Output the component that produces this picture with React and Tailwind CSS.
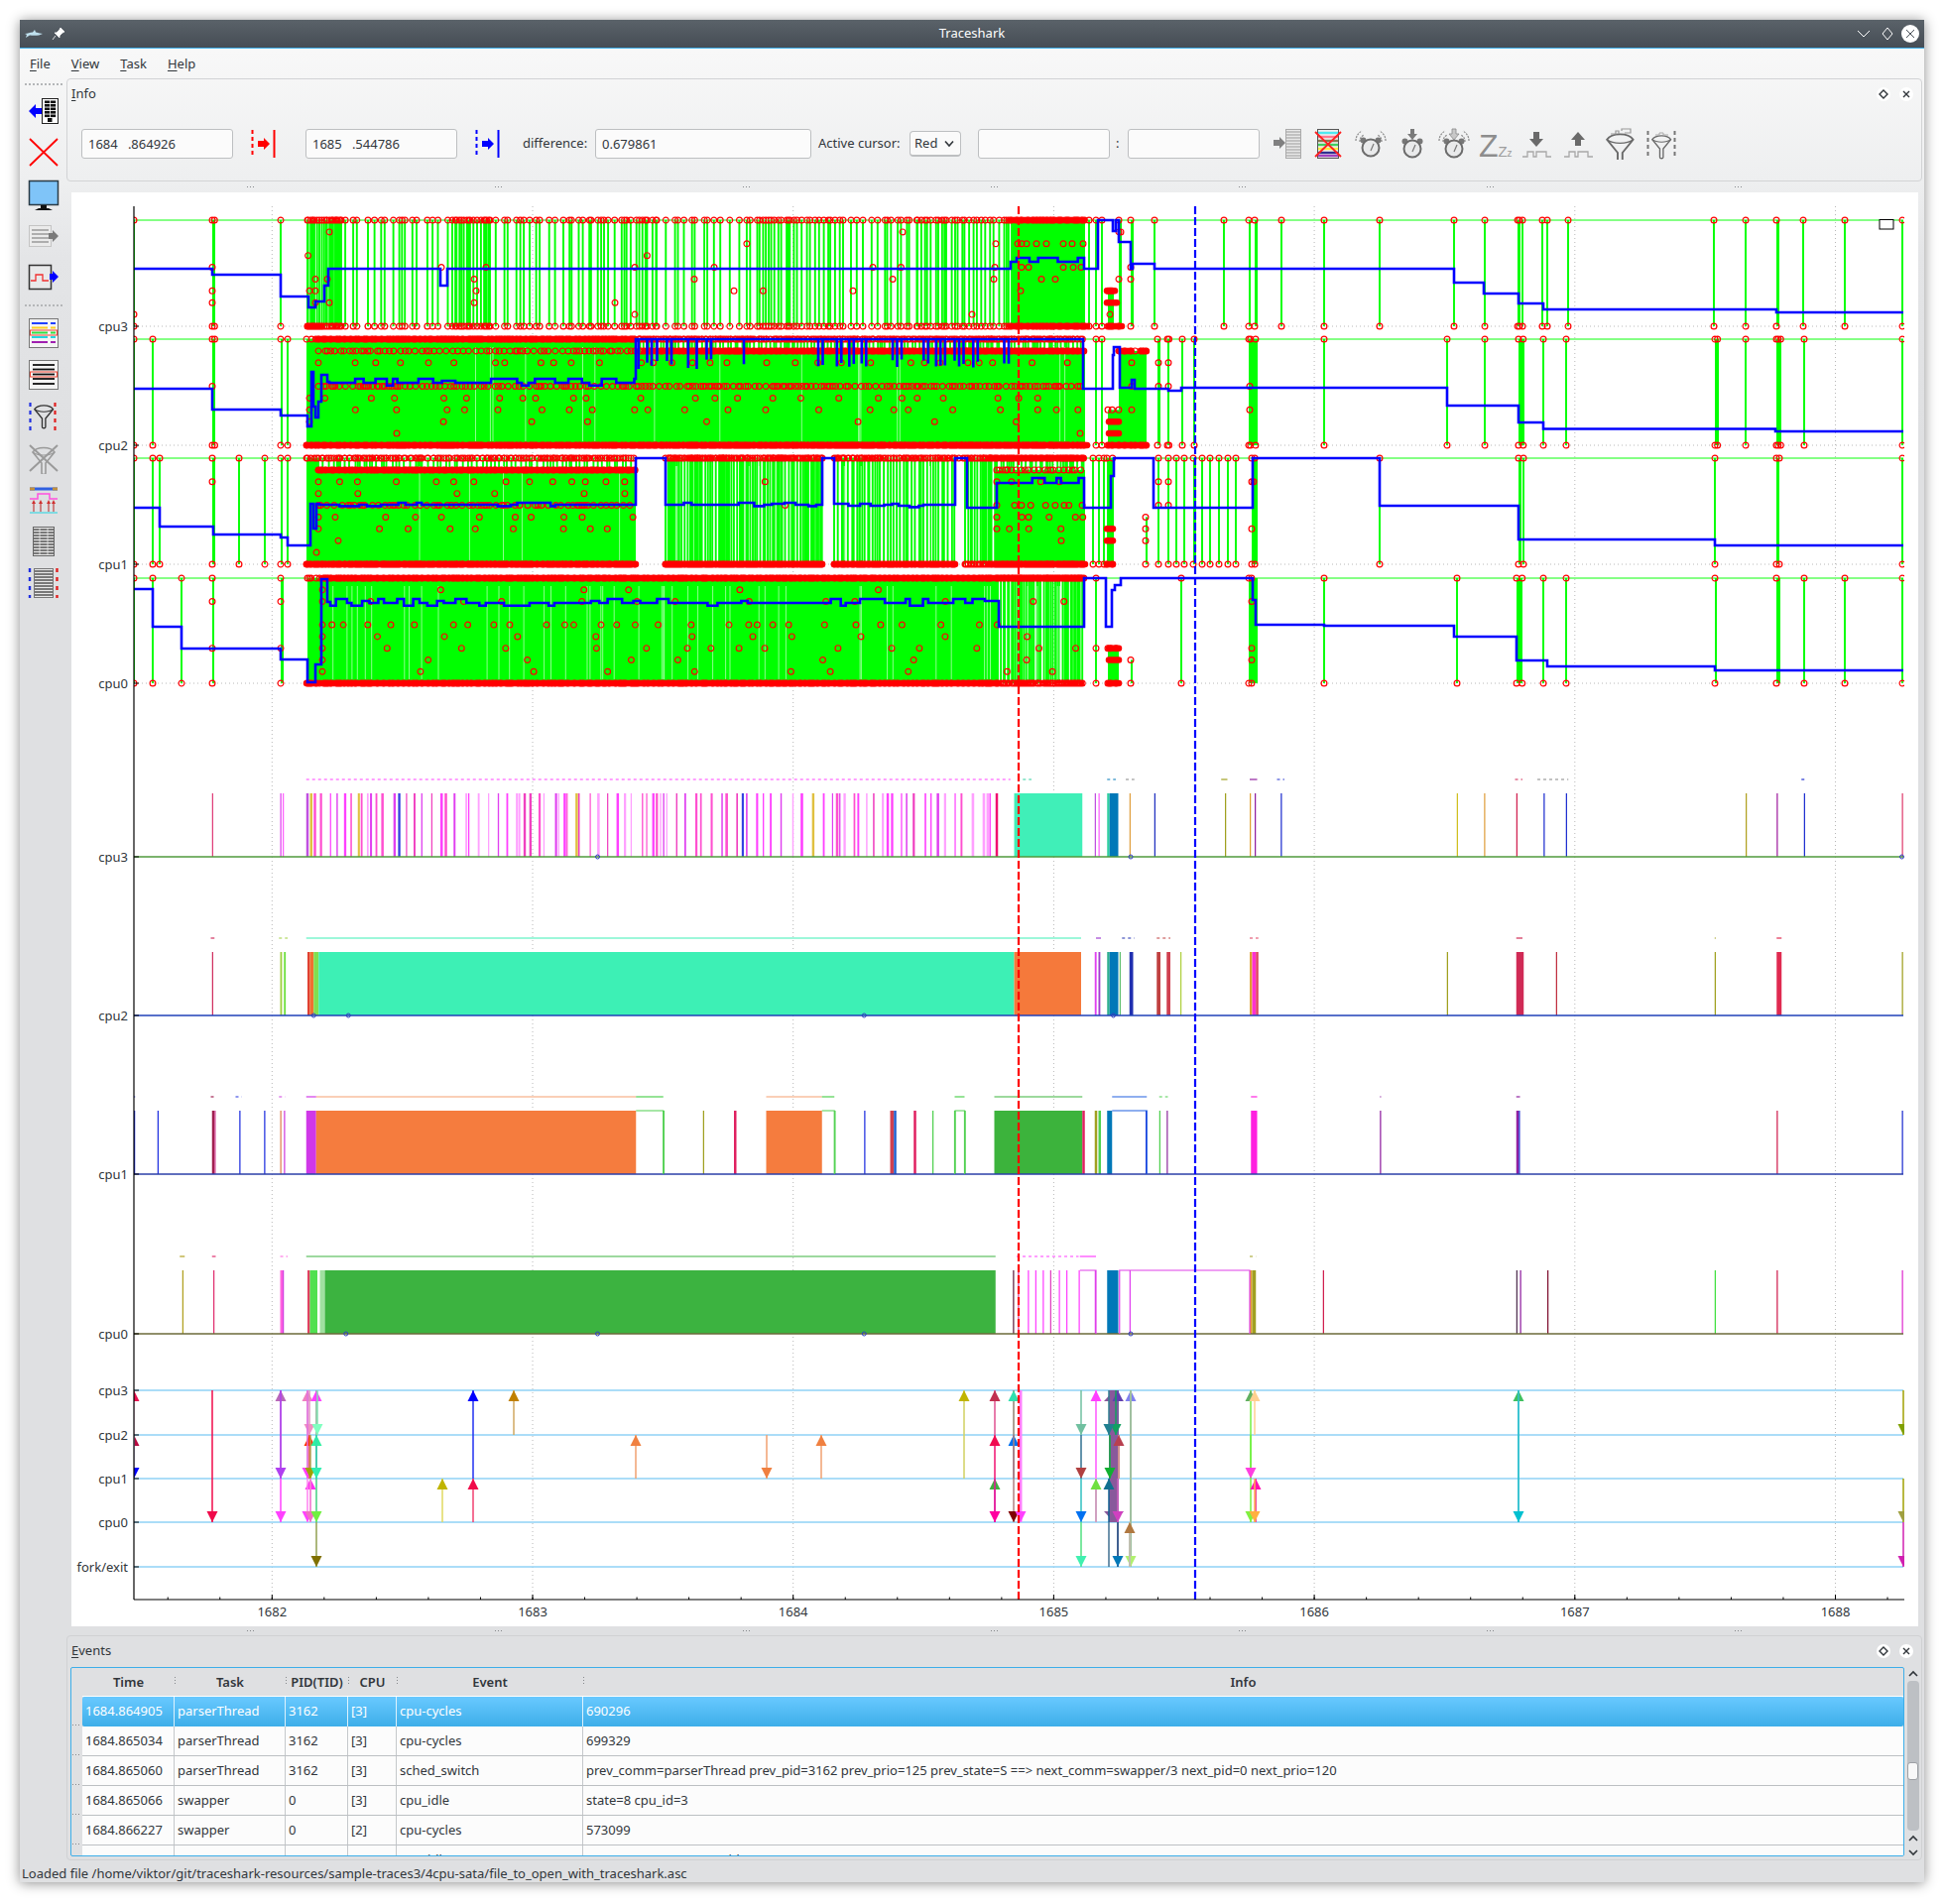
import React from 'react';

// ---- deterministic noise so the chart stays stable between runs ----
let seed = 1337;
const rnd = () => {
  seed |= 0; seed = (seed + 0x6d2b79f5) | 0;
  let t = Math.imul(seed ^ (seed >>> 15), 1 | seed);
  t = (t + Math.imul(t ^ (t >>> 7), 61 | t)) ^ t;
  return ((t ^ (t >>> 14)) >>> 0) / 4294967296;
};
const spread = (a, b, gap) => {
  const out = [];
  let x = a;
  while (x < b) { out.push(x); x += gap * (0.35 + rnd() * 1.3); }
  return out;
};
const S = (v) => v * 1.25;

const LEFT = 135;
const RIGHT = 1919;
const AXIS_Y = 1613;
const RED_X = 1027;
const BLUE_X = 1205;
const secX = (t) => 274.3 + 262.7 * (t - 1682);

// ---- frequency plots ----
function wiggle(pts, x0, x1, y, amp) {
  let x = x0;
  while (x < x1) {
    const w = 4 + rnd() * 11;
    const nx = Math.min(x + w, x1);
    const r = rnd();
    const yy = r < 0.5 ? y : r < 0.8 ? y - amp : r < 0.92 ? y + amp * 0.7 : y - amp * 0.5;
    pts.push([x, yy], [nx, yy]);
    x = nx;
  }
}
function steps(x0, segs) {
  const pts = [];
  let x = x0;
  for (const [xe, y, kind, extra] of segs) {
    if (kind === 'w') wiggle(pts, x, xe, y, extra ?? 4);
    else if (kind === 'spikes') {
      pts.push([x, y]);
      for (const [a, b] of extra) {
        for (let p = a; p <= b; p += 4.5) {
          pts.push([p, y], [p, y + 20 + rnd() * 11], [p, y]);
        }
      }
      pts.push([xe, y]);
    } else pts.push([x, y], [xe, y]);
    x = xe;
  }
  return pts.map((p) => p.map((n) => n.toFixed(1)).join(',')).join(' ');
}

const SPIKES = [[515, 518], [522, 526], [530, 533], [538, 545], [555, 558], [562, 565], [570, 575], [600, 603], [660, 664], [675, 679], [685, 689], [695, 701], [720, 728], [745, 749], [755, 763], [770, 778], [785, 789], [810, 815]].map(([a, b]) => [S(a), S(b)]);

const CPUS = [
  {
    name: 'cpu3', top: 222, base: 329,
    forests: [[310, 344, 1.6], [344, 456, 7], [456, 494, 2.5], [494, 568, 6], [568, 662, 4.5], [662, 775, 6], [775, 850, 3.5], [850, 925, 6], [925, 1019, 3.5]],
    solids: [[1019, 1094, 0], [1117, 1123, 6], [1128, 1131, 0], [1140, 1143, 0], [214, 217, 0], [1259, 1261, 0], [1265, 1268, 0], [1530, 1533, 0], [1791, 1794, 0]],
    singles: [135, 283, 1098, 1105, 1111, 1164, 1234, 1292, 1335, 1391, 1466, 1497, 1535, 1555, 1560, 1581, 1728, 1760, 1818, 1860, 1918],
    strips: [[0, 1019, 1092], [9, 1019, 1096], [6, 1116, 1124], [7, 1116, 1126], [9, 1118, 1131], [9, 310, 325]],
    mids: [[2, [1004, 1026, 1030, 1035, 1045, 1055, 1072, 1081, 1092]], [4, [1003, 1030, 1037, 1072, 1082, 1090, 1140, 214, 445, 490, 640, 720, 880]], [5, [1002, 1050, 1064, 1128, 1140, 318, 330, 478, 700, 900]], [6, [1029, 1120, 214, 312, 318, 480, 740, 860]], [7, [214, 318, 332, 478, 620]], [8, [1119, 135, 640, 980]], [1, [1128, 1130, 332, 910]]],
    pale: 0,
    blue: steps(LEFT, [[214, 271], [283, 277], [311, 299], [318, 310], [327, 304], [331, 288], [444, 271], [451, 288], [1019, 271], [1093, 264, 'w', 4], [1107, 271], [1122, 222], [1125, 233], [1128, 222], [1140, 244], [1142, 271], [1164, 266], [1466, 271], [1496, 285], [1531, 296], [1556, 306], [1791, 312], [1919, 315]]),
  },
  {
    name: 'cpu2', top: 342, base: 449,
    forests: [[640, 1094, 3.2, 1]],
    solids: [[309, 640, 0], [640, 1094, 1], [1117, 1130, 6], [1128, 1156, 1], [1167, 1170, 0], [1177, 1179, 0], [1259, 1268, 0], [1531, 1537, 0], [1729, 1733, 0], [1791, 1796, 0], [214, 217, 0], [283, 285, 0]],
    singles: [135, 154, 290, 1105, 1111, 1192, 1204, 1335, 1459, 1497, 1556, 1579, 1760, 1819, 1918],
    strips: [[0, 320, 640], [1, 650, 1092], [9, 309, 1096], [8, 1118, 1128], [7, 1118, 1128], [1, 1128, 1140], [1, 1150, 1155], [9, 1118, 1155]],
    chains: [[1, 321, 650, 4.5], [2, 321, 1090, 26], [4, 321, 1090, 4.5], [5, 312, 1090, 36], [6, 312, 1090, 38], [7, 312, 1090, 160], [0, 640, 1092, 3.5]],
    mids: [[8, [400, 1089]], [2, [1168, 1178, 1141]], [4, [1168, 1178, 1141, 1260, 214]], [6, [1141, 1260]]],
    pale: 16,
    blue: steps(LEFT, [[214, 392], [283, 413], [310, 419], [314, 430], [316, 375], [318, 410], [321, 421], [324, 405], [330, 378], [332, 385], [641, 386, 'w', 4], [1092, 342, 'spikes', SPIKES], [1122, 392], [1123, 358], [1129, 350], [1141, 391], [1144, 383], [1178, 392], [1191, 394], [1459, 391], [1531, 409], [1556, 426], [1790, 432.5], [1919, 435]]),
  },
  {
    name: 'cpu1', top: 462, base: 569,
    forests: [[321, 641, 4, 1], [671, 829, 2.4], [841, 963, 2.8], [973, 1005, 2.5], [1005, 1094, 3, 1]],
    solids: [[309, 321, 0], [321, 641, 1], [1005, 1094, 1], [1116, 1123, 0], [1155, 1157, 5], [1203, 1206, 0], [1262, 1268, 0], [1531, 1534, 0], [1791, 1794, 0], [214, 217, 0], [283, 285, 0]],
    singles: [135, 154, 161, 241, 267, 290, 310, 1102, 1108, 1113, 1168, 1178, 1186, 1194, 1212, 1220, 1229, 1238, 1246, 1391, 1536, 1729, 1918],
    strips: [[1, 321, 640], [9, 309, 641], [9, 671, 829], [9, 841, 963], [9, 1000, 1094], [0, 1000, 1092], [9, 1116, 1122], [6, 1116, 1122], [7, 1116, 1122]],
    chains: [[0, 321, 641, 4], [0, 671, 829, 3.2], [0, 841, 1000, 3.5], [2, 321, 640, 26], [3, 321, 640, 90], [4, 321, 640, 5], [5, 321, 640, 42], [6, 321, 640, 42], [9, 973, 1000, 3.5], [2, 1005, 1092, 30], [4, 1005, 1092, 12], [5, 1005, 1092, 18], [6, 1005, 1092, 30]],
    mids: [[7, [341, 1070]], [8, [319]], [2, [214, 1168, 1178, 1262, 1264]], [4, [1168, 1178]], [6, [1155, 1262]], [7, [1155]]],
    pale: 12,
    blue: steps(LEFT, [[161, 512], [215, 531], [283, 539], [290, 542], [313, 550], [316, 508], [319, 533], [322, 508], [641, 509, 'w', 2], [671, 462], [829, 509, 'w', 2], [841, 462], [963, 510, 'w', 2], [975, 462], [1005, 512], [1093, 487, 'w', 5], [1120, 512], [1123, 480], [1163, 462], [1263, 512], [1391, 462], [1531, 510], [1729, 544], [1919, 550]]),
  },
  {
    name: 'cpu0', top: 583, base: 689,
    forests: [[1006, 1092, 2.2]],
    solids: [[310, 1006, 0], [1117, 1128, 6], [1140, 1142, 7], [1259, 1268, 0], [1529, 1535, 0], [1791, 1795, 0], [1729, 1731, 0], [283, 286, 0], [214, 216, 0]],
    singles: [135, 154, 183, 1105, 1191, 1335, 1469, 1556, 1579, 1819, 1860, 1918],
    strips: [[0, 325, 1090], [9, 325, 1006], [9, 309, 320], [9, 1118, 1128], [6, 1118, 1128], [7, 1118, 1128]],
    chains: [[9, 1006, 1092, 4], [0, 1090, 1096, 4], [1, 325, 1006, 90], [2, 325, 1090, 60], [4, 325, 1006, 24], [5, 325, 1090, 60], [6, 325, 1090, 60], [7, 325, 1006, 90], [8, 325, 1090, 90]],
    mids: [[2, [214, 283, 1262]], [6, [214, 283, 1105, 1262]], [7, [1140, 1262]]],
    pale: 50,
    blue: steps(LEFT, [[154, 594], [183, 632], [283, 654], [310, 665], [318, 688], [324, 670], [330, 584], [333, 607], [1007, 608, 'w', 4], [1093, 632], [1115, 583], [1121, 632], [1124, 595], [1130, 590], [1263, 583], [1266, 605], [1335, 630], [1466, 631], [1529, 642], [1560, 666], [1729, 672], [1919, 676]]),
  },
];

const ring = (x, y, r = 2.9) => `M${(x - r).toFixed(1)} ${y}a${r} ${r} 0 1 0 ${2 * r} 0a${r} ${r} 0 1 0 ${-2 * r} 0`;

function buildFreq(c) {
  const rowY = (k) => (k === 9 ? c.base : c.top + ((c.base - c.top) * k) / 9);
  let green = '';
  let rings = '';
  let pale = '';
  for (const [a, b, gap, k = 9] of c.forests) {
    for (const x of spread(a, b, gap)) {
      green += `M${x.toFixed(1)} ${c.top}V${c.base}`;
      rings += ring(x, c.top);
      rings += ring(x, c.base);
      if (k === 9 && rnd() < 0.03) rings += ring(x, rowY(2 + Math.floor(rnd() * 6)));
    }
  }
  for (const x of c.singles) {
    green += `M${x} ${c.top}V${c.base}`;
    rings += ring(x, c.top) + ring(x, c.base);
  }
  for (const [a, b, k] of c.solids) {
    for (const x of spread(a, b, 4)) {
      rings += ring(x, rowY(k === 0 ? 0 : k));
      rings += ring(x, c.base);
    }
  }
  for (const [k, xs] of c.mids || []) for (const x of xs) rings += ring(x, rowY(k));
  for (const [k, a, b, gap] of c.chains || []) for (const x of spread(a, b, gap)) rings += ring(x, rowY(k));
  for (let i = 0; i < c.pale; i++) {
    const x = 320 + rnd() * 770;
    pale += `M${x.toFixed(1)} ${c.top + 8}V${c.base - 4}`;
  }
  const solids = c.solids.map(([a, b, k]) => [a, rowY(k), b - a, c.base - rowY(k)]);
  const strips = c.strips.map(([k, a, b]) => [a, b, rowY(k)]);
  return { green, rings, pale, solids, strips };
}
const FREQ = CPUS.map((c) => ({ ...c, ...buildFreq(c) }));

// ---- scheduler plots, x values as read off the shrunken picture ----
const MAGENTA = ['#ff40ff', '#e040f0', '#ff50d0', '#ffa0ff', '#f040c0'];
const magentaBars = spread(258, 803, 6).map((x, i) => [x, x + 0.9 + rnd() * 1.2, i % 47 === 12 ? '#3040e0' : i % 31 === 5 ? '#e0c040' : MAGENTA[Math.floor(rnd() * MAGENTA.length)]]);
const SCHED = [
  {
    name: 'cpu3', base: 864, lineColor: '#4f9a3c',
    bars: [[171, 172, '#e0407a'], [226, 227, '#e040f0'], [228, 229, '#ff60ff'], [247, 249, '#c050e0'], [250, 252, '#e0c040'], [253, 255, '#ff50d0'], ...magentaBars, [803, 805, '#f01070'], [818, 873, '#40efb8'], [883, 884, '#c050e0'], [886, 887, '#ff60ff'], [893, 895, '#30d0a0'], [895, 902, '#0078b8'], [911, 912, '#e0a040'], [931, 932, '#2030c0'], [988, 989, '#a0a020'], [1008, 1009, '#e0a030'], [1012, 1013, '#9020a0'], [1033, 1034, '#2030d0'], [1175, 1176, '#d0c020'], [1197, 1198, '#e0a040'], [1223, 1224, '#d02050'], [1245, 1246, '#2030d0'], [1263, 1264, '#2030d0'], [1408, 1409, '#b0a020'], [1433, 1434, '#a020a0'], [1455, 1456, '#2030d0'], [1534, 1535, '#e04070']],
    dashes: [[247, 815, '#ff40ff', true], [825, 832, '#30d0a0', true], [893, 900, '#0078b8', true], [908, 915, '#888', true], [985, 990, '#a0a020', false], [1008, 1014, '#9020a0', false], [1030, 1036, '#2030d0', true], [1222, 1228, '#d02050', true], [1240, 1265, '#888', true], [1453, 1457, '#2030d0', true]],
    dots: [[482, 864], [912, 864], [1534, 864]],
  },
  {
    name: 'cpu2', base: 1024, lineColor: '#1f40b8',
    bars: [[171, 172, '#d03060'], [226, 227.5, '#a0d040'], [229, 230.5, '#70e040'], [248, 250, '#e04030'], [250, 253, '#f07030'], [253, 257, '#80e050'], [257, 818, '#3df0b5'], [818, 872, '#f5793b'], [883, 884.5, '#e040f0'], [886, 887.5, '#a040d0'], [893, 895, '#30b090'], [895, 902, '#0078b8'], [903, 904, '#60c070'], [911, 914, '#2030b0'], [933, 936, '#c04040'], [941, 944, '#d04050'], [952, 953, '#b0d040'], [1008, 1010, '#e0a030'], [1010, 1013, '#ff30d0'], [1013, 1015, '#e04060'], [1167, 1168, '#a0a020'], [1223, 1229, '#d02a55'], [1255, 1256, '#c03040'], [1383, 1384, '#a0a020'], [1433, 1437, '#e02a50'], [1534, 1535, '#a0a020']],
    dashes: [[247, 872, '#3df0b5', false], [170, 173, '#d03060', false], [225, 232, '#a0d040', true], [884, 888, '#a040d0', false], [905, 915, '#2030b0', true], [933, 944, '#c04040', true], [1008, 1015, '#e04060', true], [1223, 1228, '#d02a55', false], [1383, 1384, '#a0a020', false], [1433, 1437, '#e02a50', false]],
    dots: [[253, 1024], [281, 1024], [697, 1024], [898, 1024]],
  },
  {
    name: 'cpu1', base: 1184, lineColor: '#2b3fa8',
    bars: [[108, 109, '#2030e0'], [127, 128, '#2030e0'], [171, 173, '#a02050'], [173, 174, '#d04090'], [193, 194, '#2030e0'], [213, 214, '#2030e0'], [226, 227, '#e08050'], [229, 230, '#d040e0'], [247, 255, '#d038e8'], [255, 513, '#f57c3e'], [535, 536, '#50d050'], [567, 568, '#a0a020'], [592, 594, '#e02060'], [618, 663, '#f57c3e'], [673, 674, '#40d040'], [697, 698, '#2030e0'], [718, 721, '#d04050'], [721, 723, '#2060d0'], [737, 739, '#e02060'], [752, 753, '#50d050'], [770, 771, '#50d050'], [778, 779, '#50d050'], [802, 873, '#3cb33c'], [873, 875, '#e02060'], [883, 885, '#a0a020'], [886, 888, '#50d050'], [893, 897, '#0078b8'], [924, 925, '#2030e0'], [935, 936, '#50d050'], [941, 942, '#9030a0'], [1009, 1014, '#ff20e0'], [1113, 1114, '#9020a0'], [1223, 1225, '#9020a0'], [1225, 1226, '#2030d0'], [1433, 1434, '#d02050'], [1534, 1535, '#2030d0']],
    dashes: [[255, 513, '#f5a070', false], [618, 663, '#f5a070', false], [802, 873, '#3cb33c', false], [513, 535, '#50d050', false], [663, 673, '#50d050', false], [770, 778, '#50d050', false], [897, 925, '#2060e0', false], [108, 109, '#2030e0', false], [170, 174, '#a02050', true], [190, 195, '#2030e0', true], [225, 230, '#d040e0', true], [247, 255, '#d038e8', false], [1009, 1014, '#ff20e0', false], [1113, 1114, '#9020a0', false], [1223, 1226, '#9020a0', false], [935, 942, '#50d050', true]],
    dots: [],
  },
  {
    name: 'cpu0', base: 1345, lineColor: '#6b6a3a',
    bars: [[147, 148, '#b0a020'], [172, 173, '#e03070'], [226, 228, '#ff60e0'], [228, 229, '#d040e0'], [248, 250, '#e04060'], [250, 256, '#50e050'], [258, 262, '#a0e0a0'], [262, 803, '#3cb340'], [817, 818, '#602040'], [821, 822, '#e040a0'], [829, 830, '#ff40ff'], [835, 836, '#ff40ff'], [841, 842, '#ff40ff'], [847, 848, '#e040c0'], [854, 855, '#ff40ff'], [860, 861, '#ff40ff'], [870, 871, '#ff40ff'], [883, 884, '#e040f0'], [893, 902, '#0078b8'], [911, 912, '#e040f0'], [1008, 1010, '#e0a030'], [1010, 1013, '#a0a020'], [1067, 1068, '#d02050'], [1223, 1224, '#503050'], [1226, 1227, '#9020a0'], [1248, 1249, '#801030'], [1383, 1384, '#40e040'], [1433, 1434, '#d02050'], [1534, 1535, '#e030d0']],
    dashes: [[247, 803, '#3cb340', false], [871, 884, '#ff40ff', false], [145, 149, '#b0a020', false], [171, 174, '#e03070', false], [226, 232, '#ff60e0', true], [820, 870, '#ff40ff', true], [1008, 1013, '#a0a020', true]],
    dots: [[279, 1345], [482, 1345], [697, 1345], [912, 1345]],
  },
];

// ---- migration arrows ----
const R = { c3: 1402, c2: 1447, c1: 1491, c0: 1535, fx: 1580 };
const MIGR = ['cpu3', 'cpu2', 'cpu1', 'cpu0', 'fork/exit'];
const ARROWS = [
  [135, 'c2', 'c3', '#e0b8d0', '#e8104f'], [135, 'c1', 'c2', '#d8b0c8', '#b80a40'], [135, 'c2', 'c1', '#c0c0e0', '#0000ff'],
  [214, 'c3', 'c0', '#f00a4a', '#f00a4a'],
  [283, 'c1', 'c3', '#b868d0', '#b868b8'], [283, 'c3', 'c1', '#b040f0', '#b040f0'], [283, 'c1', 'c0', '#ff40ff', '#ff40ff'],
  [310, 'c1', 'c3', '#e8a0d0', '#f080c0'], [312, 'c3', 'c2', '#e090c0', '#f090c0'], [312, 'c1', 'c2', '#e04030', '#ff3000'],
  [310, 'c3', 'c1', '#e070e0', '#ff40ff'], [313, 'c2', 'c1', '#b0a050', '#a0a000'], [313, 'c0', 'c1', '#ff60f0', '#ff30f0'],
  [310, 'c1', 'c0', '#ff80f0', '#ff40ff'], [313, 'c1', 'c0', '#f090d0', '#f070c0'],
  [319, 'c1', 'c3', '#80b090', '#ff40ff'], [320, 'c3', 'c2', '#80e0b0', '#80ffc0'], [319, 'c1', 'c2', '#8080b0', '#30f0a0'], [319, 'c2', 'c1', '#30e0b0', '#30f0b0'], [319, 'c1', 'c0', '#40d080', '#70f040'], [319, 'c0', 'fx', '#90a050', '#807000'],
  [446, 'c0', 'c1', '#e0d860', '#c0b400'], [477, 'c1', 'c3', '#2030f0', '#0000ff'], [477, 'c0', 'c1', '#f04070', '#f00a4a'], [518, 'c2', 'c3', '#d0a860', '#c08000'],
  [641, 'c1', 'c2', '#f0a070', '#f08040'], [773, 'c2', 'c1', '#f0a070', '#f08040'], [828, 'c1', 'c2', '#f0a070', '#f08040'],
  [972, 'c1', 'c3', '#d0d060', '#c0b400'],
  [1003, 'c2', 'c3', '#e05090', '#c03050'], [1003, 'c1', 'c2', '#f01070', '#f00a50'], [1003, 'c0', 'c1', '#b05090', '#40b040'], [1003, 'c1', 'c0', '#f010a0', '#ff00a0'],
  [1022, 'c2', 'c3', '#908070', '#30e0b0'], [1022, 'c1', 'c2', '#706090', '#0070f0'], [1022, 'c2', 'c0', '#b08080', '#800000'],
  [1029, 'c3', 'c0', '#ff80ff', '#ff40ff', 3],
  [1090, 'c3', 'c2', '#70c0a0', '#70c0a0'], [1090, 'c2', 'c1', '#307090', '#b04040'], [1090, 'c1', 'c0', '#30c0c0', '#0070f0'], [1090, 'c0', 'fx', '#50e080', '#40f0b0'],
  [1105, 'c1', 'c3', '#ff80ff', '#ff40ff', 2], [1105, 'c0', 'c1', '#d0a0c0', '#70e040', 2],
  [1127, 'c0', 'fx', '#406090', '#0078b8', 2], [1118, 'c0', 'fx', '#407090', '#0078b8', 0, true],
  [1127, 'c2', 'c3', '#7060a0', '#6040b0'], [1125, 'c3', 'c2', '#10a060', '#10a060'], [1118, 'c3', 'c2', '#308090', '#208090'], [1128, 'c1', 'c2', '#d09090', '#b84050', 2], [1119, 'c2', 'c1', '#10b040', '#10b030'], [1118, 'c0', 'c1', '#106090', '#107090'], [1127, 'c1', 'c0', '#d060c0', '#d040c0'],
  [1140, 'c0', 'c3', '#a0c0b0', '#8080f0', 2], [1140, 'c3', 'fx', '#a0c0a0', '#b0f070', 2], [1139, 'fx', 'c0', '#c0c0b0', '#b07840', 2],
  [1261, 'c1', 'c3', '#70f040', '#60b060'], [1261, 'c2', 'c1', '#70f040', '#ff40e0'], [1261, 'c1', 'c0', '#70f040', '#80f040'],
  [1265, 'c2', 'c3', '#ffd090', '#ffd090'], [1266, 'c0', 'c1', '#f050a0', '#ff10b0', 2], [1265, 'c1', 'c0', '#ffb050', '#ffb040'],
  [1531, 'c0', 'c3', '#30c0d0', '#40c060'], [1531, 'c3', 'c0', '#30c0d0', '#00c0d0'],
  [1919, 'c3', 'c2', '#a0a000', '#80a000'], [1919, 'c1', 'c0', '#a0a000', '#a0a040'], [1919, 'c0', 'fx', '#d020b0', '#d020b0'],
];

function Arrow({ x, from, to, line, head, w = 1.5, noHead }) {
  const y1 = R[from];
  const y2 = R[to];
  const d = y2 > y1 ? -1 : 1;
  return (
    <g>
      <line x1={x} x2={x} y1={y1} y2={y2} stroke={line} strokeWidth={w} />
      {!noHead && <polygon points={`${x},${y2} ${x - 5.5},${y2 + d * 11} ${x + 5.5},${y2 + d * 11}`} fill={head} />}
    </g>
  );
}

function Chart() {
  const secs = [1682, 1683, 1684, 1685, 1686, 1687, 1688];
  const minors = [];
  for (let t = 1681.6; t < 1688.3; t += 0.2) minors.push(secX(t));
  return (
    <svg viewBox="72 194 1862 1446" className="block w-[1862px] h-[1446px] bg-white font-['Noto_Sans',sans-serif]">
      <defs>
        <clipPath id="plotClip"><rect x={LEFT} y={200} width={RIGHT - LEFT + 1} height={1420} /></clipPath>
      </defs>

      {/* grid */}
      {secs.map((t) => (
        <line key={t} x1={secX(t)} x2={secX(t)} y1={208} y2={AXIS_Y} stroke="#b8b8b8" strokeWidth="1" strokeDasharray="1 3" />
      ))}
      {FREQ.map((c) => (
        <line key={c.name} x1={LEFT} x2={RIGHT} y1={c.base} y2={c.base} stroke="#b8b8b8" strokeDasharray="1 3" />
      ))}

      <g clipPath="url(#plotClip)">
        {/* frequency / idle plots */}
        {FREQ.map((c) => (
          <g key={c.name}>
            <line x1={LEFT} x2={RIGHT} y1={c.top} y2={c.top} stroke="#5cff5c" strokeWidth="1.5" />
            {c.solids.map(([x, y, w, h], i) => <rect key={i} x={x} y={y} width={w} height={h} fill="#00ff00" />)}
            <path d={c.green} stroke="#00ff00" strokeWidth="1.9" fill="none" />
            <path d={c.pale} stroke="#ffffff" strokeOpacity="0.55" strokeWidth="1" fill="none" />
            <path d={c.rings} stroke="#ff0000" strokeWidth="1.2" fill="none" />
            {c.strips.map(([a, b, y], i) => <line key={i} x1={a} x2={b} y1={y} y2={y} stroke="#ff0000" strokeWidth="6.5" strokeLinecap="round" />)}
            <polyline points={c.blue} fill="none" stroke="#0000ff" strokeWidth="2.6" />
          </g>
        ))}

        {/* scheduler plots */}
        {SCHED.map((c) => (
          <g key={c.name}>
            {c.dashes.map(([a, b, col, dashed], i) => (
              <line key={i} x1={S(a)} x2={S(b)} y1={c.base - 78} y2={c.base - 78} stroke={col} strokeWidth="1.2" strokeDasharray={dashed ? '3 3' : undefined} />
            ))}
            {c.bars.map(([a, b, col], i) => (
              <rect key={i} x={S(a)} y={c.base - 64} width={Math.max(1.2, S(b - a))} height={64} fill={col} />
            ))}
            <line x1={LEFT} x2={RIGHT} y1={c.base} y2={c.base} stroke={c.lineColor} strokeWidth="1.5" />
            {c.dots.map(([x, y], i) => <circle key={i} cx={S(x)} cy={y} r="2" fill="none" stroke="#3040c0" strokeWidth="1" />)}
          </g>
        ))}
        {/* outlined task blocks on cpu1 and cpu0 */}
        <path d={`M${S(513)} 1120H${S(535)}V1184M${S(663)} 1120H${S(673)}V1184M${S(770)} 1120H${S(778)}V1184M${S(770)} 1120V1184`} stroke="#50d050" strokeWidth="1.2" fill="none" />
        <path d={`M${S(897)} 1120H${S(925)}V1184`} stroke="#2060e0" strokeWidth="1.2" fill="none" />
        <path d={`M${S(871)} 1281H${S(884)}V1345M${S(903)} 1345V1281H${S(1008)}V1345`} stroke="#e040e8" strokeWidth="1.2" fill="none" />

        {/* migration plot */}
        {MIGR.map((n, i) => {
          const y = [R.c3, R.c2, R.c1, R.c0, R.fx][i];
          return <line key={n} x1={LEFT} x2={RIGHT} y1={y} y2={y} stroke="#8fd2f6" strokeWidth="1.5" />;
        })}
        <rect x={1118} y={1402} width={10} height={133} fill="#89599b" />
        <polygon points="1123,1402 1113,1413 1133,1413" fill="#89599b" />
        <polygon points="1123,1535 1113,1524 1133,1524" fill="#89599b" />
        {ARROWS.map(([x, from, to, line, head, w, noHead], i) => (
          <Arrow key={i} x={x} from={from} to={to} line={line} head={head} w={w || 1.5} noHead={noHead} />
        ))}
      </g>

      {/* cursors */}
      <line x1={RED_X} x2={RED_X} y1={208} y2={AXIS_Y} stroke="#ff0000" strokeWidth="2.2" strokeDasharray="8 3" />
      <line x1={BLUE_X} x2={BLUE_X} y1={208} y2={AXIS_Y} stroke="#0000ff" strokeWidth="2.2" strokeDasharray="8 3" />

      {/* legend box */}
      <rect x="1895" y="221.5" width="14" height="9.5" fill="#ffffff" stroke="#000000" strokeWidth="1" />

      {/* axes */}
      <line x1={LEFT} x2={LEFT} y1={208} y2={AXIS_Y} stroke="#000" strokeWidth="1.2" />
      <line x1={LEFT} x2={RIGHT + 1} y1={AXIS_Y} y2={AXIS_Y} stroke="#000" strokeWidth="1.2" />
      {minors.map((x, i) => <line key={i} x1={x} x2={x} y1={AXIS_Y - 2.5} y2={AXIS_Y} stroke="#000" />)}
      {secs.map((t) => <line key={t} x1={secX(t)} x2={secX(t)} y1={AXIS_Y - 5} y2={AXIS_Y} stroke="#000" />)}
      {[...FREQ.map((c) => c.base), ...SCHED.map((c) => c.base), R.c3, R.c2, R.c1, R.c0, R.fx].map((y) => (
        <line key={y} x1={LEFT} x2={LEFT + 5} y1={y} y2={y} stroke="#000" />
      ))}

      {/* labels */}
      {[...FREQ, ...SCHED].map((c, i) => (
        <text key={i} x={129} y={c.base + 4.5} textAnchor="end" className="text-[13px] fill-[#31363b]">{c.name}</text>
      ))}
      {MIGR.map((n, i) => (
        <text key={n} x={129} y={[R.c3, R.c2, R.c1, R.c0, R.fx][i] + 4.5} textAnchor="end" className="text-[13px] fill-[#31363b]">{n}</text>
      ))}
      {secs.map((t) => (
        <text key={t} x={secX(t)} y={1630} textAnchor="middle" className="text-[13px] fill-[#31363b]">{t}</text>
      ))}
    </svg>
  );
}

// ---- icons ----
const Ico = ({ children, w = 32, h = 32 }) => (
  <svg width={w} height={h} viewBox={`0 0 ${w} ${h}`} className="block">{children}</svg>
);
const Rows = ({ x, w, ys, color = '#000', sw = 1.5 }) => ys.map((y, i) => <line key={i} x1={x} x2={x + w} y1={y} y2={y} stroke={color} strokeWidth={sw} />);

const TaskTableIcon = () => (
  <Ico>
    <rect x="14.5" y="3.5" width="16" height="25" fill="#fff" stroke="#222" />
    {[5.5, 9, 12.5, 16, 19.5].map((y) => <g key={y}><rect x="17" y={y} width="5.2" height="2.6" fill="#111" /><rect x="23" y={y} width="5.2" height="2.6" fill="#111" /></g>)}
    <rect x="20" y="23" width="4.5" height="4" fill="#111" />
    <polygon points="1,16 8,9 8,13 14,13 14,19 8,19 8,23" fill="#0000ff" />
  </Ico>
);
const RedCross = () => (
  <Ico><path d="M2 2L30 29M30 2L2 29" stroke="#ff0000" strokeWidth="1.8" /></Ico>
);
const MonitorIcon = () => (
  <Ico>
    <rect x="1.5" y="2.5" width="29" height="24" fill="#7fc4f8" stroke="#2a3a44" strokeWidth="1.5" />
    <rect x="13" y="27" width="6" height="3" fill="#111" />
    <polygon points="5,33 27,33 21,30 11,30" fill="#111" />
  </Ico>
);
const ListArrowIcon = () => (
  <Ico>
    <rect x="1.5" y="5.5" width="22" height="21" fill="#ebebeb" stroke="#c4c4c4" />
    <Rows x={4} w={17} ys={[10, 14, 18, 22]} color="#9a9a9a" sw={1.5} />
    <polygon points="31,16 25,10 25,13 21,13 21,19 25,19 25,22" fill="#7a7a7a" />
  </Ico>
);
const WaveArrowIcon = () => (
  <Ico>
    <rect x="1.5" y="3.5" width="22" height="24" fill="#e8e9ea" stroke="#333" strokeWidth="1.5" />
    <path d="M3 19H8V13H15V19H21" fill="none" stroke="#f03030" strokeWidth="1.3" />
    <polygon points="31,15 25,9 25,12 22,12 22,18 25,18 25,21" fill="#0000ff" />
  </Ico>
);
const ColorRowsIcon = () => (
  <Ico>
    <rect x="1.5" y="1.5" width="29" height="29" fill="#f4f4f4" stroke="#777" />
    <rect x="2.5" y="13" width="27" height="5" fill="none" stroke="#ee4433" />
    {[['#2040ff', 6], ['#ffd020', 10.5], ['#30e040', 15.5], ['#20d8e0', 20], ['#a020b0', 25]].map(([c, y]) => (
      <g key={y}><line x1="4" x2="20" y1={y} y2={y} stroke={c} strokeWidth="2" /><line x1="23" x2="28" y1={y} y2={y} stroke={c} strokeWidth="2" /></g>
    ))}
  </Ico>
);
const BlackRowsIcon = () => (
  <Ico>
    <rect x="1.5" y="1.5" width="29" height="29" fill="#f4f4f4" stroke="#777" />
    <rect x="2.5" y="13" width="27" height="5" fill="none" stroke="#ee4433" />
    <Rows x={5} w={22} ys={[6, 10.5, 15.5, 20, 25]} color="#111" sw={1.8} />
  </Ico>
);
const Funnel = ({ color = '#333', x = 0, y = 0, s = 1 }) => (
  <g transform={`translate(${x} ${y}) scale(${s})`}>
    <path d="M1 9C5 3 19 3 23 9L14 20V30C14 32 10 32 10 30V20Z" fill="none" stroke={color} strokeWidth="1.6" />
    <path d="M1 9C6 13 18 13 23 9" fill="none" stroke={color} strokeWidth="1.2" />
  </g>
);
const FunnelCursorsIcon = () => (
  <Ico>
    <Funnel x={6} y={1} s={0.85} />
    <path d="M2.5 2V30" stroke="#2030e0" strokeWidth="2.2" strokeDasharray="4 4" />
    <path d="M27.5 2V30" stroke="#e02020" strokeWidth="2.2" strokeDasharray="4 4" />
  </Ico>
);
const FunnelCrossIcon = () => (
  <Ico>
    <Funnel x={4} y={1} s={1} color="#9a9a9a" />
    <path d="M2 3L30 29M30 3L2 29" stroke="#9a9a9a" strokeWidth="2" />
  </Ico>
);
const TaskWaveIcon = () => (
  <Ico>
    <line x1="2" x2="30" y1="5" y2="5" stroke="#3060e0" strokeWidth="3" />
    <path d="M2 5H7M25 5H30" stroke="#c09040" strokeWidth="3" />
    <path d="M2 15H10V10H22V15H30" fill="none" stroke="#ff50e0" strokeWidth="1.5" />
    <line x1="2" x2="30" y1="29" y2="29" stroke="#60d8e0" strokeWidth="1.5" />
    {[6, 13, 21, 26].map((x) => <g key={x}><line x1={x} x2={x} y1="18" y2="28" stroke="#c04040" strokeWidth="1.2" /><polygon points={`${x},16 ${x - 2},20 ${x + 2},20`} fill="#d03030" /></g>)}
  </Ico>
);
const GrayTableIcon = () => (
  <Ico>
    <rect x="5.5" y="1.5" width="21" height="29" fill="#e8e8e8" stroke="#666" />
    <Rows x={6} w={20} ys={[4, 7, 10, 13, 16, 19, 22, 25, 28]} color="#555" sw={1.5} />
    <path d="M12 2V30M20 2V30" stroke="#eee" strokeWidth="0.8" />
  </Ico>
);
const TableCursorsIcon = () => (
  <Ico>
    <rect x="6.5" y="1.5" width="19" height="29" fill="#e8e8e8" stroke="#777" />
    <Rows x={7} w={18} ys={[4, 7, 10, 13, 16, 19, 22, 25, 28]} color="#555" sw={1.5} />
    <path d="M2 1V31" stroke="#2030e0" strokeWidth="2.4" strokeDasharray="4 5" />
    <path d="M29.5 1V31" stroke="#e02020" strokeWidth="2.4" strokeDasharray="4 5" />
  </Ico>
);
const CursorArrow = ({ color }) => (
  <svg width="25" height="30" viewBox="0 0 25 30" className="block">
    <line x1="1.5" x2="1.5" y1="1" y2="29" stroke={color} strokeWidth="2" strokeDasharray="4 3" />
    <line x1="23.5" x2="23.5" y1="1" y2="29" stroke={color} strokeWidth="2" />
    <polygon points="19,15 13,9 13,12 7,12 7,18 13,18 13,21" fill={color} />
  </svg>
);

const GrayTableArrow = () => (
  <Ico>
    <polygon points="14,15 8,9 8,12 2,12 2,18 8,18 8,21" fill="#808080" />
    <rect x="14.5" y="1.5" width="15" height="29" fill="#e8e8e8" stroke="#aaa" />
    <Rows x={15} w={14} ys={[4, 7, 10, 13, 16, 19, 22, 25, 28]} color="#b4b4b4" sw={1.5} />
  </Ico>
);
const CrossedColorTable = () => (
  <Ico>
    <rect x="4.5" y="1.5" width="21" height="29" fill="#eee" stroke="#555" />
    {[['#4fe8f0', 5], ['#ff7a90', 9], ['#8a7a50', 13], ['#40d060', 17], ['#ffec40', 21], ['#303090', 25], ['#a040c0', 28]].map(([c, y]) => (
      <line key={y} x1="5" x2="25" y1={y} y2={y} stroke={c} strokeWidth="2.4" />
    ))}
    <path d="M2 4L28 29M28 4L2 29" stroke="#ff2020" strokeWidth="1.8" />
  </Ico>
);
const Clock = ({ x = 16, y = 19, r = 8.5 }) => (
  <g>
    <circle cx={x - r + 1} cy={y - r + 1} r="3" fill="#777" />
    <circle cx={x + r - 1} cy={y - r + 1} r="3" fill="#777" />
    <circle cx={x} cy={y} r={r} fill="#e9eaeb" stroke="#6c6c6c" strokeWidth="2" />
    <path d={`M${x} ${y + 3}L${x + 3} ${y - 4}`} stroke="#777" strokeWidth="1.2" />
  </g>
);
const Waves = () => (
  <path d="M1 13C1 8 4 5 7 3M5 14C5 11 6 9 9 7M31 13C31 8 28 5 25 3M27 14C27 11 26 9 23 7" fill="none" stroke="#8a8a8a" strokeWidth="1.2" strokeDasharray="2 1" />
);
const WakeIcon = () => <Ico><Waves /><Clock y={20} /></Ico>;
const WakeDownIcon = () => (
  <Ico>
    <Clock y={21} />
    <polygon points="16,12 11,6 14,6 14,1 18,1 18,6 21,6" fill="#7a7a7a" />
  </Ico>
);
const WakeBothIcon = () => (
  <Ico>
    <Waves />
    <Clock y={21} />
    <polygon points="16,12 11,6 14,6 14,1 18,1 18,6 21,6" fill="#c8c8c8" stroke="#888" strokeWidth="0.8" />
  </Ico>
);
const ZzzIcon = () => (
  <Ico w={34}>
    <text x="0" y="29" className="font-['Liberation_Sans',sans-serif] text-[32px] fill-[#8d8d8d]">Z</text>
    <text x="19.5" y="29" className="font-['Liberation_Sans',sans-serif] text-[15px] fill-[#9d9d9d]">Z</text>
    <text x="28.5" y="29" className="font-['Liberation_Sans',sans-serif] text-[10px] fill-[#9d9d9d]">z</text>
  </Ico>
);
const PulseArrow = ({ up }) => (
  <Ico>
    <polygon points={up ? '15,4 8,12 12,12 12,18 18,18 18,12 22,12' : '15,19 8,11 12,11 12,4 18,4 18,11 22,11'} fill="#6a6a6a" />
    <path d="M1 29H6V24H12V29H15V24H25V29H30" fill="none" stroke="#a8a8a8" strokeWidth="1.3" />
  </Ico>
);
const FunnelTasksIcon = () => (
  <Ico>
    <Funnel x={1} y={1} s={1.2} color="#6a6a6a" />
    <path d="M6 6H11V3H14V6M17 3V1H26V5H20" fill="none" stroke="#999" strokeWidth="1.2" />
  </Ico>
);
const FunnelTasksCursors = () => (
  <Ico>
    <Funnel x={5} y={4} s={0.85} color="#6a6a6a" />
    <path d="M9 7H13V5H17V7H22" fill="none" stroke="#aaa" strokeWidth="1" />
    <path d="M1.5 3V31M28.5 3V31" stroke="#777" strokeWidth="2" strokeDasharray="4 3" />
  </Ico>
);

const Dots = ({ dir = 'row' }) => (
  <div className={dir === 'row' ? 'flex gap-[2px] w-[8px]' : 'flex flex-col gap-[2px]'}>
    <span className="w-px h-px bg-[#85888b]" />
    <span className="w-px h-px bg-[#85888b]" />
    <span className="w-px h-px bg-[#85888b]" />
  </div>
);
const Splitter = ({ h }) => (
  <div className={`flex items-center pl-[182px] gap-[242px] ${h}`}>
    {[0, 1, 2, 3, 4, 5, 6].map((i) => <Dots key={i} />)}
  </div>
);
const ToolHandle = () => (
  <div className="flex justify-center h-full items-center">
    <div className="w-[38px] border-t-2 border-dotted border-[#b4b6b8]" />
  </div>
);

const DockButtons = () => (
  <div className="flex items-center gap-[9px]">
    <span className="w-[14px] h-[14px] rounded-full bg-white flex items-center justify-center">
      <svg width="10" height="10" viewBox="0 0 10 10"><path d="M5 1L9 5L5 9L1 5Z" fill="none" stroke="#31363b" strokeWidth="1.4" /></svg>
    </span>
    <span className="w-[14px] h-[14px] rounded-full bg-white flex items-center justify-center">
      <svg width="10" height="10" viewBox="0 0 10 10"><path d="M2 2L8 8M8 2L2 8" stroke="#31363b" strokeWidth="1.4" /></svg>
    </span>
  </div>
);

const Field = ({ value = '', w }) => (
  <input readOnly value={value} className={`${w} h-[30px] shrink-0 bg-[#fbfbfb] border border-[#bdbfc1] rounded-[3px] px-[6px] text-[13px] text-[#31363b] outline-none`} />
);

const LEFT_TOOLS = [TaskTableIcon, RedCross, MonitorIcon, ListArrowIcon, WaveArrowIcon, null, ColorRowsIcon, BlackRowsIcon, FunnelCursorsIcon, FunnelCrossIcon, TaskWaveIcon, GrayTableIcon, TableCursorsIcon];
const INFO_TOOLS = [GrayTableArrow, CrossedColorTable, WakeIcon, WakeDownIcon, WakeBothIcon, ZzzIcon, () => <PulseArrow />, () => <PulseArrow up />, FunnelTasksIcon, FunnelTasksCursors];

const COLS = 'grid grid-cols-[93px_112px_63px_49px_188px_1fr]';
const HEAD = ['Time', 'Task', 'PID(TID)', 'CPU', 'Event', 'Info'];
const EVENTS = [
  ['1684.864905', 'parserThread', '3162', '[3]', 'cpu-cycles', '690296'],
  ['1684.865034', 'parserThread', '3162', '[3]', 'cpu-cycles', '699329'],
  ['1684.865060', 'parserThread', '3162', '[3]', 'sched_switch', 'prev_comm=parserThread prev_pid=3162 prev_prio=125 prev_state=S ==> next_comm=swapper/3 next_pid=0 next_prio=120'],
  ['1684.865066', 'swapper', '0', '[3]', 'cpu_idle', 'state=8 cpu_id=3'],
  ['1684.866227', 'swapper', '0', '[2]', 'cpu-cycles', '573099'],
  ['1684.866234', 'swapper', '0', '[2]', 'cpu_idle', 'state=4294967295 cpu_id=2'],
];

const Underlined = ({ first, rest }) => (
  <span><span className="underline underline-offset-2">{first}</span>{rest}</span>
);

export default function App() {
  return (
    <div className="w-[1960px] h-[1920px] bg-white pl-5 pt-5 font-['Noto_Sans',sans-serif] text-[13px] text-[#31363b]">
      <div className="w-[1920px] h-[1878px] flex flex-col overflow-hidden shadow-[0_1px_12px_rgba(0,0,0,0.45)] bg-[linear-gradient(180deg,#f8f8f8_30px,#eeeff0_160px,#e4e5e7_240px,#dfe0e2_420px)]">
        {/* title bar */}
        <div className="relative h-[29px] shrink-0 flex items-center bg-[linear-gradient(180deg,#5a6269,#464d55)] border-b border-[#3daee9]">
          <svg width="18" height="10" viewBox="0 0 18 10" className="ml-[5px]">
            <path d="M0 5C3 5 5 3.5 8 3.5L10 1L11 3.5C14 4 16 5 18 5C15 7 9 7 5 6.5L1 9L2 6Z" fill="#bfe0ee" />
          </svg>
          <svg width="14" height="14" viewBox="0 0 14 14" className="ml-[9px]">
            <path d="M9 1L13 5L11 6L8 9L8 11L3 6L5 6L8 3Z M4 9L1 13" fill="#ffffff" stroke="#ffffff" strokeWidth="0.8" />
          </svg>
          <span className="flex-1 text-center text-white pl-[22px]">Traceshark</span>
          <svg width="14" height="14" viewBox="0 0 14 14"><path d="M1 4L7 10L13 4" fill="none" stroke="#fff" strokeWidth="1" /></svg>
          <svg width="14" height="14" viewBox="0 0 14 14" className="ml-[10px]"><path d="M7 1L12 7L7 13L2 7Z" fill="none" stroke="#fff" strokeWidth="1" /></svg>
          <span className="ml-[7px] mr-[5px] w-[18px] h-[18px] rounded-full bg-white flex items-center justify-center">
            <svg width="10" height="10" viewBox="0 0 10 10"><path d="M1 1L9 9M9 1L1 9" stroke="#4a5159" strokeWidth="1" /></svg>
          </span>
        </div>

        {/* menu bar */}
        <div className="h-[30px] shrink-0 flex items-center pt-[2px] pl-[10px] gap-[21px]">
          <Underlined first="F" rest="ile" />
          <Underlined first="V" rest="iew" />
          <Underlined first="T" rest="ask" />
          <Underlined first="H" rest="elp" />
        </div>

        <div className="flex flex-1 min-h-0">
          {/* left tool bar */}
          <div className="w-[47px] shrink-0 flex flex-col">
            <div className="h-[12px]"><ToolHandle /></div>
            {LEFT_TOOLS.map((Icon, i) => (Icon ? (
              <div key={i} className="h-[42px] flex items-center justify-center"><Icon /></div>
            ) : (
              <div key={i} className="h-[14px]"><ToolHandle /></div>
            )))}
          </div>

          {/* central column */}
          <div className="w-[1871px] flex flex-col">
            {/* info dock */}
            <div className="h-[104px] shrink-0 border border-[#d2d3d5] rounded-[4px] flex flex-col">
              <div className="h-[29px] flex items-center justify-between pl-[4px] pr-[8px]">
                <Underlined first="I" rest="nfo" />
                <DockButtons />
              </div>
              <div className="flex items-center mt-[21px] pl-[14px] h-[30px]">
                <Field w="w-[153px]" value="1684   .864926" />
                <div className="ml-[18px]"><CursorArrow color="#ff0000" /></div>
                <div className="ml-[30px]"><Field w="w-[153px]" value="1685   .544786" /></div>
                <div className="ml-[18px]"><CursorArrow color="#0000ff" /></div>
                <span className="ml-[23px] w-[65px] shrink-0 whitespace-nowrap">difference:</span>
                <div className="ml-[8px]"><Field w="w-[218px]" value="0.679861" /></div>
                <span className="ml-[7px] w-[82px] shrink-0 whitespace-nowrap">Active cursor:</span>
                <div className="ml-[10px] w-[52px] h-[26px] shrink-0 bg-[#fafafa] border border-[#bdbfc1] border-b-2 rounded-[4px] flex items-center justify-between pl-[4px] pr-[6px]">
                  <span>Red</span>
                  <svg width="10" height="8" viewBox="0 0 10 8"><path d="M1 1.5L5 6L9 1.5" fill="none" stroke="#31363b" strokeWidth="1.6" /></svg>
                </div>
                <div className="ml-[17px]"><Field w="w-[133px]" /></div>
                <span className="ml-[6px] w-[4px] shrink-0">:</span>
                <div className="ml-[8px]"><Field w="w-[133px]" /></div>
                <div className="ml-[7px] flex shrink-0">
                  {INFO_TOOLS.map((Icon, i) => (
                    <div key={i} className="w-[42px] h-[32px] flex items-center justify-center"><Icon /></div>
                  ))}
                </div>
              </div>
            </div>

            <Splitter h="h-[11px]" />

            <div className="ml-[5px] w-[1862px] h-[1446px] shrink-0"><Chart /></div>

            <Splitter h="h-[9px]" />

            {/* events dock */}
            <div className="h-[227px] shrink-0 border border-[#d0d1d3] rounded-[4px] flex flex-col pl-[3px]">
              <div className="h-[31px] shrink-0 flex items-center justify-between pl-[1px] pr-[8px] pb-[2px]">
                <Underlined first="E" rest="vents" />
                <DockButtons />
              </div>
              <div className="flex h-[191px]">
                <div className="w-[1849px] h-[191px] border border-[#3daee9] rounded-[2px] flex flex-col overflow-hidden">
                  <div className="h-[28px] shrink-0 flex">
                    <div className="w-[11px] shrink-0" />
                    <div className={`${COLS} flex-1 font-semibold`}>
                      {HEAD.map((h) => (
                        <div key={h} className="relative flex items-center justify-center pt-[2px]">
                          {h}
                          <span className="absolute right-[-1px] top-[9px]"><Dots dir="col" /></span>
                        </div>
                      ))}
                    </div>
                  </div>
                  <div className="h-px shrink-0 ml-[11px] bg-white" />
                  <div className="flex-1 min-h-0 overflow-hidden">
                    {EVENTS.map((row, i) => (
                      <div key={row[0]} className="h-[30px] flex">
                        <div className="w-[11px] shrink-0 relative">
                          <span className="absolute left-[1px] bottom-[1px]"><Dots /></span>
                        </div>
                        <div className={`${COLS} flex-1 ${i === 0 ? 'bg-[linear-gradient(180deg,#69c9ff,#3daee9)] text-white rounded-[2px]' : 'bg-[#fcfcfc] border-b border-[#bcc0c3]'}`}>
                          {row.map((cell, j) => (
                            <div key={j} className={`flex items-center pl-[3px] whitespace-nowrap overflow-hidden ${j < 5 ? (i === 0 ? 'border-r border-white/80' : 'border-r border-[#c5c8cb]') : ''}`}>
                              {cell}
                            </div>
                          ))}
                        </div>
                      </div>
                    ))}
                  </div>
                </div>
                {/* scroll bar */}
                <div className="ml-[2px] w-[13px] flex flex-col items-center">
                  <svg width="12" height="12" viewBox="0 0 12 12" className="mt-[1px] shrink-0"><path d="M2 8L6 4L10 8" fill="none" stroke="#31363b" strokeWidth="1.6" /></svg>
                  <div className="mt-[1px] w-[12px] h-[151px] rounded-[4px] bg-[#bdc0c4] pt-[82px] pb-0 shrink-0">
                    <div className="w-[11px] h-[18px] mx-auto bg-[#f8f8f8] border border-[#9da0a4] rounded-[3px]" />
                  </div>
                  <svg width="12" height="12" viewBox="0 0 12 12" className="mt-[2px] shrink-0"><path d="M2 8L6 4L10 8" fill="none" stroke="#31363b" strokeWidth="1.6" /></svg>
                  <svg width="12" height="12" viewBox="0 0 12 12" className="mt-[2px] shrink-0"><path d="M2 4L6 8L10 4" fill="none" stroke="#31363b" strokeWidth="1.6" /></svg>
                </div>
              </div>
            </div>
          </div>
        </div>

        {/* status bar */}
        <div className="h-[22px] shrink-0 flex items-center pl-[2px] pt-[5px]">
          Loaded file /home/viktor/git/traceshark-resources/sample-traces3/4cpu-sata/file_to_open_with_traceshark.asc
        </div>
      </div>
    </div>
  );
}
